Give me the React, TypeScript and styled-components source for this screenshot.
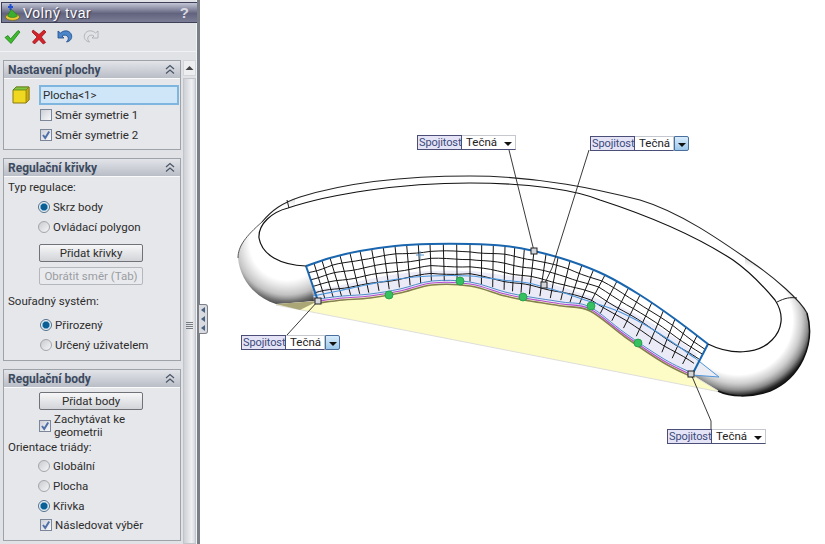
import React from "react";
import styled, { createGlobalStyle } from "styled-components";

const GlobalStyle = createGlobalStyle`
    html, body {
        margin: 0;
        padding: 0;
        background: #fff;
        overflow: hidden;
    }
    body {
        font-family: Roboto, "Liberation Sans", sans-serif;
        font-size: 11.5px;
        color: #2c2c2c;
    }
`;

const Page = styled.div`
    display: flex;
    width: 825px;
    height: 544px;
    overflow: hidden;
`;

const Sidebar = styled.div`
    display: flex;
    flex-direction: column;
    flex: none;
    width: 200px;
    height: 544px;
    padding-top: 2px;
    box-sizing: border-box;
    background: #e0e2e6;
    border-right: 3px solid #7b8088;
    box-shadow: inset -1px 0 0 #f2f3f5;
    overflow: hidden;
`;

const TitleBar = styled.div`
    display: flex;
    align-items: center;
    flex: none;
    gap: 2px;
    box-sizing: border-box;
    height: 21px;
    margin: 0 0 0 1px;
    padding: 0 8px 0 3px;
    background: linear-gradient(#c3c6d6, #62647f 55%, #7b7d96);
    border: 1px solid #3e4058;
    border-width: 1px 0 1px 1px;
`;

const TitleText = styled.span`
    flex: 1;
    font-family: "Liberation Sans", sans-serif;
    font-size: 14px;
    letter-spacing: 0.7px;
    color: #fff;
    text-shadow: 1px 1px 1px #34364c;
`;

const Help = styled.span`
    font-family: "Liberation Sans", sans-serif;
    font-size: 15px;
    font-weight: 700;
    color: #d8d9e2;
`;

const Toolbar = styled.div`
    display: flex;
    align-items: center;
    flex: none;
    gap: 10px;
    height: 28px;
    padding: 0 0 0 4px;
    border-bottom: 1px solid #f0f1f3;
`;

const Body = styled.div`
    display: flex;
    flex: 1;
    min-height: 0;
    padding: 8px 0 0 3px;
`;

const Sections = styled.div`
    display: flex;
    flex-direction: column;
    flex: none;
    gap: 8px;
    width: 178px;
`;

const Section = styled.section`
    box-sizing: border-box;
    height: ${(p: { $h: number }) => p.$h}px;
    background: #e6e7eb;
    border: 1px solid #9ea2a9;
`;

const SectionHeader = styled.header`
    display: flex;
    align-items: center;
    justify-content: space-between;
    height: 17px;
    padding: 0 5px 0 4px;
    background: linear-gradient(#e2e4e9, #b9bdc6);
    border-bottom: 1px solid #fafafa;
    font-family: Roboto, sans-serif;
    font-size: 12px;
    font-weight: 700;
    color: #3c4a60;
`;

const Row = styled.div<{ $h?: number; $mt?: number; $indent?: number }>`
    display: flex;
    align-items: center;
    gap: 3px;
    height: ${(p) => p.$h ?? 20}px;
    margin-top: ${(p) => p.$mt ?? 0}px;
    padding-left: ${(p) => p.$indent ?? 0}px;
    white-space: nowrap;
`;

const NameInput = styled.div`
    display: flex;
    align-items: center;
    box-sizing: border-box;
    width: 140px;
    height: 20px;
    margin-left: 6px;
    padding-left: 2px;
    background: #cfe6f8;
    border: 2px solid #7fb6e0;
`;

const Box = styled.span`
    display: inline-flex;
    align-items: center;
    justify-content: center;
    box-sizing: border-box;
    flex: none;
    width: 12px;
    height: 12px;
    background: linear-gradient(135deg, #cdd0d8, #f8f8fa);
    border: 1px solid #7b8798;
`;

const Radio = styled.span<{ $on?: boolean }>`
    flex: none;
    box-sizing: border-box;
    width: 12px;
    height: 12px;
    border-radius: 50%;
    border: 1px solid ${(p) => (p.$on ? "#51708c" : "#a3a6ab")};
    background: ${(p) =>
        p.$on
            ? "radial-gradient(circle, #0a5f95 0 3px, #6ea7cb 3.5px, #f2f4f6 4.5px)"
            : "linear-gradient(135deg, #c9cbd0, #f6f6f7)"};
`;

const Button = styled.div<{ $off?: boolean; $mt?: number; $ml?: number }>`
    display: flex;
    align-items: center;
    justify-content: center;
    box-sizing: border-box;
    width: 104px;
    height: 18px;
    margin: ${(p) => p.$mt ?? 0}px 0 0 ${(p) => p.$ml ?? 35}px;
    border: 1px solid ${(p) => (p.$off ? "#b4b7bc" : "#6f7379")};
    border-radius: 2px;
    background: ${(p) => (p.$off ? "#e9eaed" : "linear-gradient(#f7f7f8, #d2d4d8)")};
    color: ${(p) => (p.$off ? "#9a9da3" : "#2c2c2c")};
`;

const TwoLine = styled.span`
    line-height: 13px;
    white-space: normal;
    width: 100px;
`;

const Scrollbar = styled.div`
    display: flex;
    flex-direction: column;
    flex: none;
    width: 13px;
    margin-left: 2px;
    gap: 2px;
`;

const ScrollUp = styled.div`
    display: flex;
    align-items: center;
    justify-content: center;
    flex: none;
    height: 16px;
    background: #eceef0;
    border: 1px solid #d3d5d9;
    box-sizing: border-box;
`;

const ScrollThumb = styled.div`
    display: flex;
    flex-direction: column;
    align-items: center;
    flex: 1;
    padding-top: 243px;
    gap: 1px;
    background: linear-gradient(90deg, #cdd0d5, #eff0f2 70%, #d5d7db);
    border: 1px solid #c2c5ca;
    box-sizing: border-box;
`;

const GripLine = styled.i`
    display: block;
    width: 7px;
    height: 1px;
    background: #777b82;
`;

const Canvas = styled.div`
    position: relative;
    flex: 1;
    height: 544px;
    background: #fff;
`;

const Drawing = styled.svg`
    display: block;
    width: 625px;
    height: 544px;
`;

const CollapseTab = styled.div`
    position: absolute;
    left: -1px;
    top: 304px;
    display: flex;
    flex-direction: column;
    align-items: center;
    justify-content: center;
    gap: 3px;
    box-sizing: border-box;
    width: 9px;
    height: 30px;
    background: #d9dbe0;
    border: 1px solid #7b8088;
    border-left: 0;
    border-radius: 0 3px 3px 0;
`;

const TabArrow = styled.i`
    display: block;
    width: 0;
    height: 0;
    border: 3px solid transparent;
    border-left-width: 0;
    border-right: 4px solid #4a6280;
`;

const Callout = styled.div<{ $x: number; $y: number }>`
    position: absolute;
    left: ${(p) => p.$x}px;
    top: ${(p) => p.$y}px;
    display: flex;
    height: 15px;
    font-size: 11.5px;
    line-height: 13px;
`;

const CalloutLabel = styled.div`
    box-sizing: border-box;
    width: 45px;
    padding-left: 1px;
    background: #e4e4f6;
    border: 1px solid #4b4f78;
    color: #3c4a7c;
    font-size: 11px;
    letter-spacing: -0.1px;
    white-space: nowrap;
`;

const CalloutValue = styled.div<{ $open?: boolean }>`
    display: flex;
    align-items: center;
    box-sizing: border-box;
    width: ${(p) => (p.$open ? 39 : 54)}px;
    padding: 0 3px 0 4px;
    background: #fff;
    border: 1px solid #c6c8d0;
    border-bottom-color: #4b4f78;
    border-left: 0;
    color: #222;
`;

const CalloutName = styled.span`
    flex: 1;
`;

const CalloutArrow = styled.i`
    display: block;
    width: 0;
    height: 0;
    margin-top: 3px;
    border: 4px solid transparent;
    border-top: 4px solid #111;
    border-bottom: 0;
`;

const CalloutButton = styled.div`
    display: flex;
    align-items: center;
    justify-content: center;
    box-sizing: border-box;
    width: 15px;
    background: linear-gradient(#d8ecfb, #9cc7ea);
    border: 1px solid #4b6f9c;
    border-radius: 0 2px 2px 0;
`;

const Chevrons = () => (
    <svg width="10" height="11" viewBox="0 0 10 11" fill="none" stroke="#4a5566" strokeWidth="1.2">
        <path d="M1 5 5 1.5 9 5M1 9.5 5 6 9 9.5" />
    </svg>
);

const Check = () => (
    <svg width="10" height="10" viewBox="0 0 10 10" fill="none" stroke="#4f6fa8" strokeWidth="2">
        <path d="M2 5 4.2 8 8.2 1.5" />
    </svg>
);

const Arrow = () => (
    <svg width="9" height="6" viewBox="0 0 9 6">
        <path d="M0.5 5 4.5 1 8.5 5Z" fill="#444" />
    </svg>
);

const TitleIcon = () => (
    <svg width="16" height="17" viewBox="0 0 16 17">
        <path d="M5.5 0v6M3 3h5" stroke="#1f4fd0" strokeWidth="2" />
        <ellipse cx="7.5" cy="13" rx="7" ry="3.4" fill="#e8c93a" stroke="#57500f" strokeWidth=".6" />
        <path d="M2.500 12 6 5.500c2 1 4 3 6.500 6.500-3 2-7 2-10 0Z" fill="#3cae2e" stroke="#1d6e14" strokeWidth=".5" />
    </svg>
);

const OkIcon = () => (
    <svg width="17" height="16" viewBox="0 0 17 16">
        <path d="M1 8.500 4 6.500 6.500 10 14 1.500l2 1.500L7 14.500Z" fill="#3fbb2e" stroke="#1e7d16" strokeWidth=".8" />
    </svg>
);

const CancelIcon = () => (
    <svg width="16" height="16" viewBox="0 0 16 16">
        <path d="M2 1 8 5.500 13 1l2 2-4.600 5 4.200 5.500-2.400 1.500L8 10.500 3.500 15 1.500 13 6 8 1 3Z" fill="#d8222a" stroke="#8e1015" strokeWidth=".7" />
    </svg>
);

const UndoIcon = ({ off }: { off?: boolean }) => (
    <svg width="16" height="16" viewBox="0 0 16 16" style={off ? { transform: "scaleX(-1)" } : undefined}>
        <path
            d="M1 2v7h6L5 7c2-1.500 5-1 6 1 .7 1.800 0 3.500-1.500 5 3.500-.5 6-3.500 5-7C13.500 2 8 0 3.500 4Z"
            fill={off ? "#e2e3e6" : "#4a86c8"}
            stroke={off ? "#a5a8ae" : "#1c4a8c"}
            strokeWidth=".8"
        />
    </svg>
);

const CubeIcon = () => (
    <svg width="18" height="18" viewBox="0 0 18 18">
        <path d="M1 4 4 1h13v13l-3 3H1Z" fill="#f0d820" stroke="#8a7a10" />
        <path d="M1 4 4 1h13l-3 3Z" fill="#86c440" stroke="#4a7a18" strokeWidth=".7" />
        <path d="M14 4l3-3v13l-3 3Z" fill="#c6aa10" stroke="#8a7a10" strokeWidth=".7" />
    </svg>
);

type Pt = [number, number];

const topEdge: Pt[] = [
    [306, 266], [330, 258], [360, 251], [395, 246], [430, 244], [470, 244],
    [505, 246], [534, 251], [570, 261], [605, 275], [640, 295], [675, 319], [708, 344],
];
const midEdge: Pt[] = [
    [313, 296], [338, 291], [366, 285], [398, 279], [430, 276], [470, 276],
    [502, 280], [528, 283], [558, 291], [585, 300], [620, 312], [657, 332], [695, 358],
];
const bottomEdge: Pt[] = [
    [318, 301], [343, 298], [370, 296], [400, 291], [432, 283], [470, 284],
    [505, 294], [530, 299], [562, 304], [590, 309], [625, 335], [664, 361], [692, 375],
];

// evaluates a polyline at t in 0..1
const at = (pts: Pt[], t: number): Pt => {
    const f = t * (pts.length - 1);
    const i = Math.min(Math.floor(f), pts.length - 2);
    const k = f - i;
    return [pts[i][0] + (pts[i + 1][0] - pts[i][0]) * k, pts[i][1] + (pts[i + 1][1] - pts[i][1]) * k];
};

const toPath = (pts: Pt[]) => "M" + pts.map((p) => p[0].toFixed(1) + " " + p[1].toFixed(1)).join("L");

const smooth = (pts: Pt[]) => {
    let d = `M${pts[0][0]} ${pts[0][1]}`;
    for (let i = 0; i < pts.length - 1; i++) {
        const p0 = pts[Math.max(i - 1, 0)];
        const p1 = pts[i];
        const p2 = pts[i + 1];
        const p3 = pts[Math.min(i + 2, pts.length - 1)];
        const c1x = p1[0] + (p2[0] - p0[0]) / 6;
        const c1y = p1[1] + (p2[1] - p0[1]) / 6;
        const c2x = p2[0] - (p3[0] - p1[0]) / 6;
        const c2y = p2[1] - (p3[1] - p1[1]) / 6;
        d += `C${c1x.toFixed(1)} ${c1y.toFixed(1)} ${c2x.toFixed(1)} ${c2y.toFixed(1)} ${p2[0]} ${p2[1]}`;
    }
    return d;
};

const COLS = 36;
const ROWS = 5;
const steps = Array.from({ length: 61 }, (_, i) => i / 60);

// lower limit of the mesh, most of the way from the mid line to the bottom edge
const meshEnd = (t: number): Pt => {
    const m = at(midEdge, t);
    const b = at(bottomEdge, t);
    return [m[0] + (b[0] - m[0]) * 0.7, m[1] + (b[1] - m[1]) * 0.7];
};

const meshRows = Array.from({ length: ROWS - 1 }, (_, r) => {
    const v = (r + 1) / ROWS;
    return toPath(
        steps.map((t) => {
            const a = at(topEdge, t);
            const b = meshEnd(t);
            const w = Math.sin(t * 47 + r) * 0.6;
            return [a[0] + (b[0] - a[0]) * v, a[1] + (b[1] - a[1]) * v + w] as Pt;
        })
    );
});

const meshCols = Array.from({ length: COLS - 1 }, (_, c) => {
    const t = (c + 1) / COLS;
    const a = at(topEdge, t);
    const b = meshEnd(t);
    return `M${a[0].toFixed(1)} ${a[1].toFixed(1)}L${b[0].toFixed(1)} ${b[1].toFixed(1)}`;
});

const greenDots: Pt[] = [[389, 295], [460, 281], [523, 297], [591, 306], [638, 343]];
const handles: Pt[] = [[318, 301], [534, 251], [544, 285], [691, 374]];
const leaders = [
    "M509 150 534 251",
    "M589 150 552 268 544 285",
    "M287 335 318 301",
    "M691 374 711 421 711 429",
];

const outerPath =
    "M262 222C272 210 282 203 300 197C345 183 400 176 470 176C540 176 600 190 640 200C680 212 720 240 753 263C775 278 800 300 807 313C816 345 800 378 770 391C750 398 730 397 718 391L692 375L318 301L276 304C256 298 240 280 238 258C238 246 246 236 262 222Z";
const innerLine =
    "M306 266C280 265 262 255 259 238C258 224 272 212 288 208C330 194 400 183 470 183C530 183 575 190 600 200C640 213 690 232 733 260C750 272 765 288 775 300C785 315 782 330 772 340C758 355 730 355 708 344";

const Model = () => (
    <Drawing viewBox="200 0 625 544">
        <defs>
            <radialGradient id="leftEnd" gradientUnits="userSpaceOnUse" cx="287" cy="243" r="74">
                <stop offset="0.5" stopColor="#aaa" stopOpacity="0" />
                <stop offset="0.7" stopColor="#999" stopOpacity="0.6" />
                <stop offset="0.78" stopColor="#777" />
                <stop offset="0.87" stopColor="#333" />
            </radialGradient>
            <radialGradient id="rightEnd" gradientUnits="userSpaceOnUse" cx="738" cy="320" r="88">
                <stop offset="0.62" stopColor="#bbb" stopOpacity="0" />
                <stop offset="0.72" stopColor="#bbb" stopOpacity="0.7" />
                <stop offset="0.8" stopColor="#888" />
                <stop offset="0.86" stopColor="#222" />
            </radialGradient>
            <clipPath id="leftClip">
                <path d="M230 180H295V260H325V320H230Z" />
            </clipPath>
            <clipPath id="rightClip">
                <path d="M745 240H830V420H695V360H745Z" />
            </clipPath>
        </defs>
        <path d={outerPath} fill="url(#leftEnd)" clipPath="url(#leftClip)" />
        <path d={outerPath} fill="url(#rightEnd)" clipPath="url(#rightClip)" />
        <path d={`${innerLine}L${toPath([...topEdge].reverse()).slice(1)}Z`} fill="#fff" />
        <path
            d={`M276 305L318 301${toPath(bottomEdge.slice(1)).replace("M", "L")}L720 392Z`}
            fill="#fdfbc6"
            stroke="#dededa"
            strokeWidth="1"
        />
        <path d="M276 304 318 301 300 310Z" fill="#aaa676" />
        <path d={`${toPath(topEdge)}L${toPath([...bottomEdge].reverse()).slice(1)}Z`} fill="#fff" />
        <path d={smooth(midEdge)} fill="none" stroke="#d5d4f2" strokeWidth="10" strokeOpacity=".45" />
        <path d={`${toPath(midEdge)}L${toPath([...bottomEdge].reverse()).slice(1)}Z`} fill="#ebebf8" />
        <g fill="none" stroke="#151515" strokeWidth="1">
            {meshRows.map((d) => (
                <path key={d} d={d} />
            ))}
            {meshCols.map((d) => (
                <path key={d} d={d} />
            ))}
        </g>
        <path d={smooth(bottomEdge)} transform="translate(0 2)" fill="none" stroke="#85814e" strokeWidth="1.600" />
        <path d={smooth(bottomEdge)} fill="none" stroke="#b24ad0" strokeWidth="1.100" />
        <path d={smooth(bottomEdge)} transform="translate(0 -2)" fill="none" stroke="#3c7fc0" strokeWidth=".9" />
        <path d={smooth(midEdge)} fill="none" stroke="#4f97dc" strokeWidth="1.200" />
        <path d="M695 358 719 377 692 375" fill="#ececf4" stroke="#4f97dc" strokeWidth="1" />
        <path d={smooth(topEdge)} fill="none" stroke="#1a66ae" strokeWidth="2" />
        <path d="M306 266 318 301" stroke="#1a66ae" strokeWidth="2" />
        <path d="M708 344 692 375" stroke="#1a66ae" strokeWidth="2" />
        <path
            d="M262 222C272 210 282 203 300 197C345 183 400 176 470 176C540 176 600 190 640 200C680 212 720 240 753 263C775 278 800 300 807 313"
            fill="none"
            stroke="#222"
            strokeWidth="1.100"
        />
        <path d="M262 222C246 236 238 246 238 258" fill="none" stroke="#555" strokeWidth="1" />
        <path d="M807 313C816 345 800 378 770 391C750 398 730 397 718 391" fill="none" stroke="#111" strokeWidth="1.500" />
        <path d={innerLine} fill="none" stroke="#111" strokeWidth="1.200" />
        <path d="M287 200 289 208M777 302C785 298 790 297 797 298" fill="none" stroke="#222" strokeWidth="1" />
        <path d="M416 255h8M420 251v8" stroke="#5b94c8" strokeWidth="1" />
        {greenDots.map(([x, y]) => (
            <circle key={x} cx={x} cy={y} r="4" fill="#36c060" stroke="#1f9a44" strokeWidth=".8" />
        ))}
        {leaders.map((d) => (
            <path key={d} d={d} fill="none" stroke="#222" strokeWidth=".9" />
        ))}
        {handles.map(([x, y]) => (
            <rect key={x} x={x - 3} y={y - 3} width="6" height="6" fill="#d4d6dc" stroke="#222" strokeWidth="1" />
        ))}
    </Drawing>
);

const ContinuityCallout = ({ x, y, open }: { x: number; y: number; open?: boolean }) => (
    <Callout $x={x} $y={y}>
        <CalloutLabel>Spojitost</CalloutLabel>
        <CalloutValue $open={open}>
            <CalloutName>Tečná</CalloutName>
            {!open && <CalloutArrow />}
        </CalloutValue>
        {open && (
            <CalloutButton>
                <CalloutArrow />
            </CalloutButton>
        )}
    </Callout>
);

const App: React.FC = () => {
    return (
        <Page>
            <GlobalStyle />
            <Sidebar>
                <TitleBar>
                    <TitleIcon />
                    <TitleText>Volný tvar</TitleText>
                    <Help>?</Help>
                </TitleBar>
                <Toolbar>
                    <OkIcon />
                    <CancelIcon />
                    <UndoIcon />
                    <UndoIcon off />
                </Toolbar>
                <Body>
                    <Sections>
                        <Section $h={90}>
                            <SectionHeader>
                                Nastavení plochy
                                <Chevrons />
                            </SectionHeader>
                            <Row $mt={6} $indent={8}>
                                <CubeIcon />
                                <NameInput>Plocha&lt;1&gt;</NameInput>
                            </Row>
                            <Row $indent={36}>
                                <Box />
                                Směr symetrie 1
                            </Row>
                            <Row $h={19} $indent={36}>
                                <Box>
                                    <Check />
                                </Box>
                                Směr symetrie 2
                            </Row>
                        </Section>
                        <Section $h={203}>
                            <SectionHeader>
                                Regulační křivky
                                <Chevrons />
                            </SectionHeader>
                            <Row $indent={4}>Typ regulace:</Row>
                            <Row $indent={34}>
                                <Radio $on />
                                Skrz body
                            </Row>
                            <Row $indent={34}>
                                <Radio />
                                Ovládací polygon
                            </Row>
                            <Button $mt={7}>Přidat křivky</Button>
                            <Button $mt={5} $off>
                                Obrátit směr (Tab)
                            </Button>
                            <Row $mt={6} $indent={4}>
                                Souřadný systém:
                            </Row>
                            <Row $mt={4} $indent={36}>
                                <Radio $on />
                                Přirozený
                            </Row>
                            <Row $indent={36}>
                                <Radio />
                                Určený uživatelem
                            </Row>
                        </Section>
                        <Section $h={172}>
                            <SectionHeader>
                                Regulační body
                                <Chevrons />
                            </SectionHeader>
                            <Button $mt={4}>Přidat body</Button>
                            <Row $h={28} $mt={2} $indent={35}>
                                <Box>
                                    <Check />
                                </Box>
                                <TwoLine>Zachytávat ke geometrii</TwoLine>
                            </Row>
                            <Row $h={14} $indent={4}>
                                Orientace triády:
                            </Row>
                            <Row $mt={2} $indent={34}>
                                <Radio />
                                Globální
                            </Row>
                            <Row $indent={34}>
                                <Radio />
                                Plocha
                            </Row>
                            <Row $h={19} $indent={34}>
                                <Radio $on />
                                Křivka
                            </Row>
                            <Row $indent={36}>
                                <Box>
                                    <Check />
                                </Box>
                                Následovat výběr
                            </Row>
                        </Section>
                    </Sections>
                    <Scrollbar>
                        <ScrollUp>
                            <Arrow />
                        </ScrollUp>
                        <ScrollThumb>
                            <GripLine />
                            <GripLine />
                            <GripLine />
                            <GripLine />
                        </ScrollThumb>
                    </Scrollbar>
                </Body>
            </Sidebar>
            <Canvas>
                <Model />
                <CollapseTab>
                    <TabArrow />
                    <TabArrow />
                    <TabArrow />
                </CollapseTab>
                <ContinuityCallout x={217} y={135} />
                <ContinuityCallout x={390} y={136} open />
                <ContinuityCallout x={41} y={335} open />
                <ContinuityCallout x={467} y={429} />
            </Canvas>
        </Page>
    );
};

export default App;
